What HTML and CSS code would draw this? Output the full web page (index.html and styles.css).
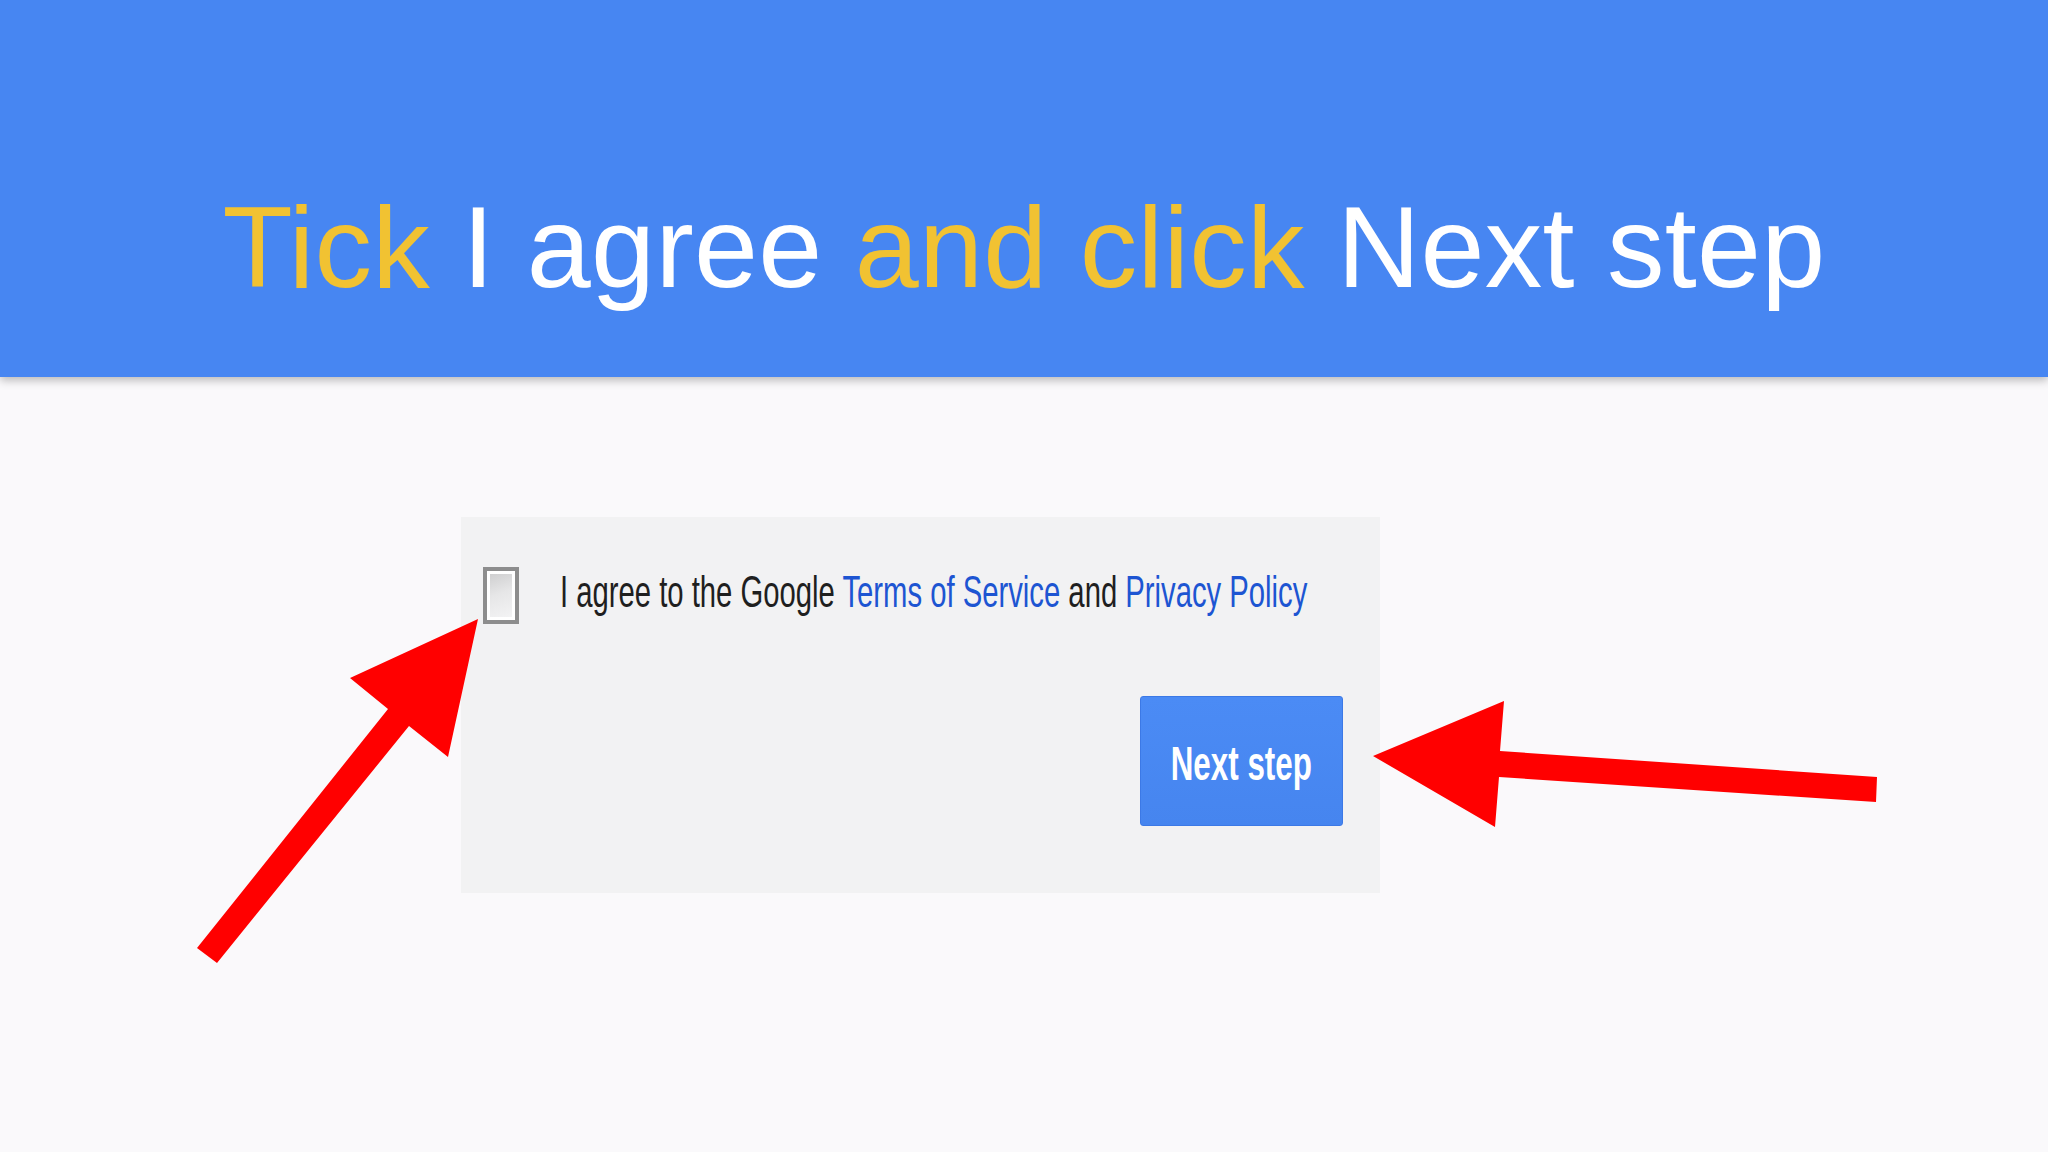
FILE: index.html
```html
<!DOCTYPE html>
<html lang="en">
<head>
<meta charset="utf-8">
<title>Tick I agree and click Next step</title>
<link rel="stylesheet" href="styles.css">
</head>
<body>
<div class="page">
  <header class="banner">
    <h1 class="title"><span class="hl">Tick</span> I agree <span class="hl">and click</span> Next step</h1>
  </header>
  <main class="content">
    <section class="form-box">
      <div class="agree-row">
        <span class="checkbox"><span class="checkbox-inner"></span></span>
        <span class="agree-text">I agree to the Google <a class="link">Terms of Service</a> and <a class="link">Privacy Policy</a></span>
      </div>
      <div class="button-row">
        <button class="next-btn"><span class="next-label">Next step</span></button>
      </div>
    </section>
  </main>
  <svg class="arrows" width="2048" height="1152" viewBox="0 0 2048 1152" xmlns="http://www.w3.org/2000/svg">
    <polygon fill="#ff0000" points="478,619 448,757 409,726 217,963 197,948 388,709 350,678"/>
    <polygon fill="#ff0000" points="1373,756 1504,701 1500,751 1877,777 1876,802 1499,777 1495,827"/>
  </svg>
</div>
</body>
</html>
```

FILE: styles.css
```css
html, body {
  margin: 0;
  padding: 0;
}
body {
  background: #faf9fb;
  font-family: "Liberation Sans", Arial, sans-serif;
  width: 2048px;
  height: 1152px;
  overflow: hidden;
}
.page {
  position: relative;
  width: 2048px;
  height: 1152px;
}
.banner {
  box-sizing: border-box;
  height: 377px;
  padding-top: 190px;
  background: #4786f2;
  box-shadow: 0 3px 9px rgba(0, 0, 0, 0.28);
  position: relative;
  z-index: 1;
}
.title {
  margin: 0;
  text-align: center;
  font-weight: normal;
  font-size: 115px;
  line-height: 114px;
  color: #ffffff;
  white-space: nowrap;
  letter-spacing: 0.3px;
}
.hl {
  color: #f1c232;
}
.content {
  padding-top: 140px;
  padding-left: 461px;
}
.form-box {
  box-sizing: border-box;
  width: 919px;
  height: 376px;
  background: #f2f2f3;
  padding: 50px 37px 67px 22px;
  display: flex;
  flex-direction: column;
}
.agree-row {
  display: flex;
  align-items: flex-start;
  height: 57px;
}
.checkbox {
  box-sizing: border-box;
  flex: 0 0 auto;
  width: 36px;
  height: 57px;
  border: 4px solid #8d8d8d;
  background: #ffffff;
  padding: 3px;
}
.checkbox-inner {
  display: block;
  width: 100%;
  height: 100%;
  background: linear-gradient(160deg, #cfcfd0 0%, #e6e6e7 45%, #f3f3f4 100%);
}
.agree-text {
  flex: 0 0 auto;
  display: inline-block;
  margin-left: 41px;
  margin-top: 2px;
  font-size: 45px;
  line-height: 45px;
  color: #1f1f1f;
  white-space: nowrap;
  transform: scaleX(0.65);
  transform-origin: left top;
}
.link {
  color: #1d55d2;
  text-decoration: none;
}
.button-row {
  display: flex;
  justify-content: flex-end;
  margin-top: 72px;
}
.next-btn {
  box-sizing: border-box;
  width: 203px;
  height: 130px;
  margin: 0;
  padding: 0;
  border: 1px solid #3c79e6;
  border-radius: 3px;
  background: linear-gradient(#4b8bf5, #4685ef);
  display: flex;
  align-items: center;
  justify-content: center;
  overflow: visible;
  font-family: "Liberation Sans", Arial, sans-serif;
}
.next-label {
  display: inline-block;
  flex: 0 0 auto;
  white-space: nowrap;
  font-size: 49px;
  font-weight: bold;
  line-height: 49px;
  color: #ffffff;
  transform: scaleX(0.64);
  transform-origin: center center;
  margin-top: 4px;
}
.arrows {
  position: absolute;
  left: 0;
  top: 0;
  z-index: 2;
  pointer-events: none;
}
```
